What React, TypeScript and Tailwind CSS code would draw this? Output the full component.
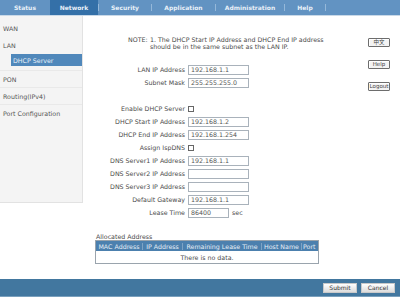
import React from "react";

const tabs = [
  { name: "Status", w: "w-[50px]", active: false },
  { name: "Network", w: "w-[48px]", active: true },
  { name: "Security", w: "w-[52px]", active: false },
  { name: "Application", w: "w-[63px]", active: false },
  { name: "Administration", w: "w-[68px]", active: false },
  { name: "Help", w: "w-[40px]", active: false },
];

type Row =
  | { label: string; kind: "text"; value: string; short?: boolean }
  | { label: string; kind: "check" }
  | { kind: "blank" };

const rows: Row[] = [
  { label: "LAN IP Address", kind: "text", value: "192.168.1.1" },
  { label: "Subnet Mask", kind: "text", value: "255.255.255.0" },
  { kind: "blank" },
  { label: "Enable DHCP Server", kind: "check" },
  { label: "DHCP Start IP Address", kind: "text", value: "192.168.1.2" },
  { label: "DHCP End IP Address", kind: "text", value: "192.168.1.254" },
  { label: "Assign IspDNS", kind: "check" },
  { label: "DNS Server1 IP Address", kind: "text", value: "192.168.1.1" },
  { label: "DNS Server2 IP Address", kind: "text", value: "" },
  { label: "DNS Server3 IP Address", kind: "text", value: "" },
  { label: "Default Gateway", kind: "text", value: "192.168.1.1" },
  { label: "Lease Time", kind: "text", value: "86400", short: true },
];

function SideItem({ label, line = true }: { label: string; line?: boolean }) {
  return (
    <div
      className={
        "h-[17px] flex items-center pl-[3px] " +
        (line ? "border-b border-[#e9e9e9]" : "")
      }
    >
      {label}
    </div>
  );
}

function ClassicBtn({ children }: { children: React.ReactNode }) {
  return (
    <button className="w-[22px] h-[9px] flex items-center justify-center border border-[#6d6d6d] bg-[#f3f3f3] shadow-[inset_1px_1px_0_#ffffff] text-[5.5px] leading-[7px] text-[#444] rounded-[1px]">
      {children}
    </button>
  );
}

export default function App() {
  return (
    <div className="w-[400px] h-[297px] flex flex-col bg-white font-['DejaVu_Sans','Noto_Sans_CJK_SC',sans-serif] text-[6.3px] leading-[7px] text-[#4a4a4a] overflow-hidden">
      {/* top nav */}
      <nav className="h-[16px] shrink-0 bg-[#6293c2] border-b border-[#c9d9e8] flex items-stretch text-[6px]">
        {tabs.map((t, i) => (
          <React.Fragment key={t.name}>
            <div
              className={
                t.w +
                " flex items-center justify-center font-bold text-[#e8f0f8] " +
                (t.active ? "bg-[#3470a8]" : "")
              }
            >
              {t.name}
            </div>
            {i > 0 && <div className="w-[1px] my-[4px] bg-[#95b8d9]" />}
          </React.Fragment>
        ))}
      </nav>

      {/* middle */}
      <div className="flex-1 flex min-h-0">
        <aside className="w-[83px] h-[187px] shrink-0 bg-[#f4f4f4] border-r border-b border-[#e2e2e2] flex flex-col pt-[4px] text-[#555]">
          <SideItem label="WAN" line={false} />
          <SideItem label="LAN" line={false} />
          <div className="h-[17px] border-b border-[#e9e9e9]">
            <div className="ml-[11px] h-[12px] bg-[#5088bb] text-[#e9f1f8] flex items-center pl-[2px]">
              DHCP Server
            </div>
          </div>
          <SideItem label="PON" />
          <SideItem label="Routing(IPv4)" />
          <SideItem label="Port Configuration" line={false} />
        </aside>

        <main className="flex-1 flex flex-col">
          <div className="mt-[20px] ml-[45px] flex">
            <span className="w-[22px] shrink-0">NOTE:</span>
            <span className="whitespace-nowrap">
              1. The DHCP Start IP Address and DHCP End IP address
              <br />
              should be in the same subnet as the LAN IP.
            </span>
          </div>

          <div className="mt-[13px] flex flex-col">
            {rows.map((r, i) =>
              r.kind === "blank" ? (
                <div key={i} className="h-[13px]" />
              ) : (
                <div key={i} className="h-[13px] flex items-center">
                  <div className="w-[102px] text-right whitespace-nowrap">{r.label}</div>
                  <div className="ml-[3px] flex items-center">
                    {r.kind === "check" ? (
                      <span className="w-[6px] h-[6px] border border-[#666] bg-white" />
                    ) : (
                      <>
                        <span
                          className={
                            (r.short ? "w-[41px]" : "w-[61px]") +
                            " h-[10px] border border-[#a9b2bb] bg-white flex items-center px-[2px] text-[#555]"
                          }
                        >
                          {r.value}
                        </span>
                        {r.short && <span className="ml-[3px]">sec</span>}
                      </>
                    )}
                  </div>
                </div>
              )
            )}
          </div>

          <div className="mt-[14px] ml-[13px]">Allocated Address</div>
          <div className="ml-[12px] w-[224px] border border-[#9aa4ad] flex flex-col">
            <div className="h-[10px] bg-[#4c80ae] text-[#e6eef6] flex items-center whitespace-nowrap">
              <div className="w-[47px] text-center border-r border-[#7ea3c4]">MAC Address</div>
              <div className="w-[40px] text-center border-r border-[#7ea3c4]">IP Address</div>
              <div className="w-[79px] text-center border-r border-[#7ea3c4]">Remaining Lease Time</div>
              <div className="w-[40px] text-center border-r border-[#7ea3c4]">Host Name</div>
              <div className="flex-1 text-left pl-[1px] overflow-hidden">Port</div>
            </div>
            <div className="h-[12px] flex items-center justify-center bg-white">
              There is no data.
            </div>
          </div>
        </main>

        <div className="w-[40px] shrink-0 flex flex-col items-start pl-[8px] pt-[22px] gap-[13px]">
          <ClassicBtn>中文</ClassicBtn>
          <ClassicBtn>Help</ClassicBtn>
          <ClassicBtn>Logout</ClassicBtn>
        </div>
      </div>

      {/* footer */}
      <footer className="h-[18px] shrink-0 bg-[#42779f] border-b border-[#7aa0bd] flex items-center justify-end gap-[4px] pr-[5px]">
        <button className="w-[34px] h-[10px] flex items-center justify-center bg-gradient-to-b from-[#ffffff] to-[#dcdcdc] border border-[#c9c9c9] text-[#333] text-[6px] leading-[7px]">
          Submit
        </button>
        <button className="w-[34px] h-[10px] flex items-center justify-center bg-gradient-to-b from-[#ffffff] to-[#dcdcdc] border border-[#c9c9c9] text-[#333] text-[6px] leading-[7px]">
          Cancel
        </button>
      </footer>
    </div>
  );
}
